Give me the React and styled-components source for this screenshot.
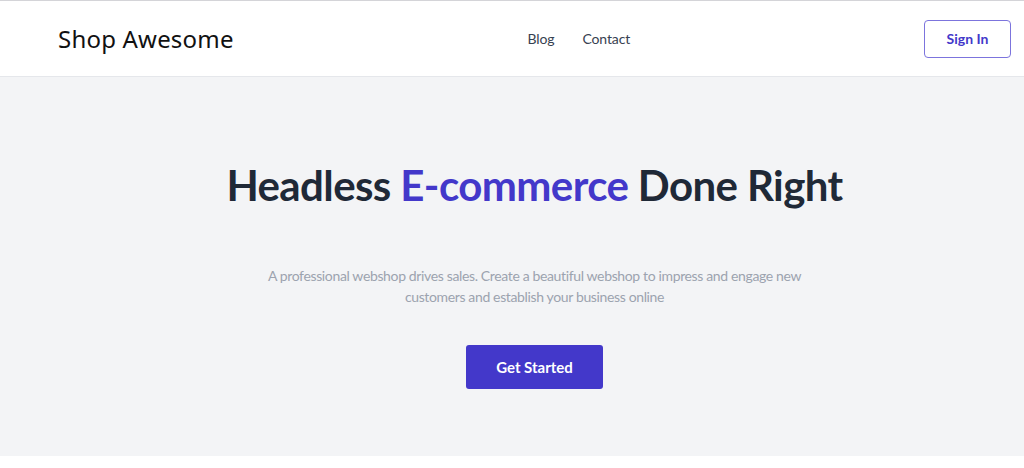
import React from "react";
import styled, { createGlobalStyle } from "styled-components";

const Global = createGlobalStyle`
  html, body { margin: 0; padding: 0; background: #ffffff; }
  body { font-family: Lato, "Noto Sans", sans-serif; -webkit-font-smoothing: antialiased; }
  * { box-sizing: border-box; }
`;

const Header = styled.header`
  display: flex;
  align-items: center;
  justify-content: space-between;
  height: 77px;
  padding: 0 13px 0 58px;
  background: #ffffff;
  border-top: 1px solid #d4d4d8;
  border-bottom: 1px solid #e5e7eb;
`;

const Logo = styled.div`
  font-family: "Noto Sans", sans-serif;
  font-size: 24px;
  color: #111111;
  letter-spacing: 0.2px;
`;

const Nav = styled.nav`
  display: flex;
  gap: 28px;
`;

const NavLink = styled.a`
  font-size: 14px;
  letter-spacing: -0.1px;
  color: #374151;
  text-decoration: none;
`;

const SignIn = styled.button`
  width: 87px;
  height: 38px;
  border: 1px solid #7c74dd;
  border-radius: 4px;
  background: #ffffff;
  color: #4338ca;
  font-family: inherit;
  font-size: 14px;
  font-weight: 700;
  cursor: pointer;
`;

const Hero = styled.section`
  display: flex;
  flex-direction: column;
  align-items: center;
  background: #f3f4f6;
  height: 379px;
  padding: 80px 0 0 45px;
`;

const Title = styled.h1`
  margin: 0;
  font-size: 42px;
  font-weight: 700;
  color: #1f2937;
  letter-spacing: -0.6px;
  line-height: 56px;
`;

const Accent = styled.span`
  color: #4338ca;
`;

const Sub = styled.p`
  margin: 52px 0 0;
  max-width: 545px;
  text-align: center;
  font-size: 14px;
  letter-spacing: -0.36px;
  line-height: 21px;
  color: #9ca3af;
`;

const Cta = styled.button`
  margin-top: 38px;
  width: 137px;
  height: 44px;
  border: 0;
  border-radius: 3px;
  background: #4338ca;
  color: #ffffff;
  font-family: inherit;
  font-size: 15px;
  font-weight: 700;
  cursor: pointer;
`;

export default function App() {
  return (
    <>
      <Global />
      <Header>
        <Logo>Shop Awesome</Logo>
        <Nav>
          <NavLink href="#">Blog</NavLink>
          <NavLink href="#">Contact</NavLink>
        </Nav>
        <SignIn>Sign In</SignIn>
      </Header>
      <Hero>
        <Title>
          Headless <Accent>E-commerce</Accent> Done Right
        </Title>
        <Sub>
          A professional webshop drives sales. Create a beautiful webshop to impress and engage new
          customers and establish your business online
        </Sub>
        <Cta>Get Started</Cta>
      </Hero>
    </>
  );
}
